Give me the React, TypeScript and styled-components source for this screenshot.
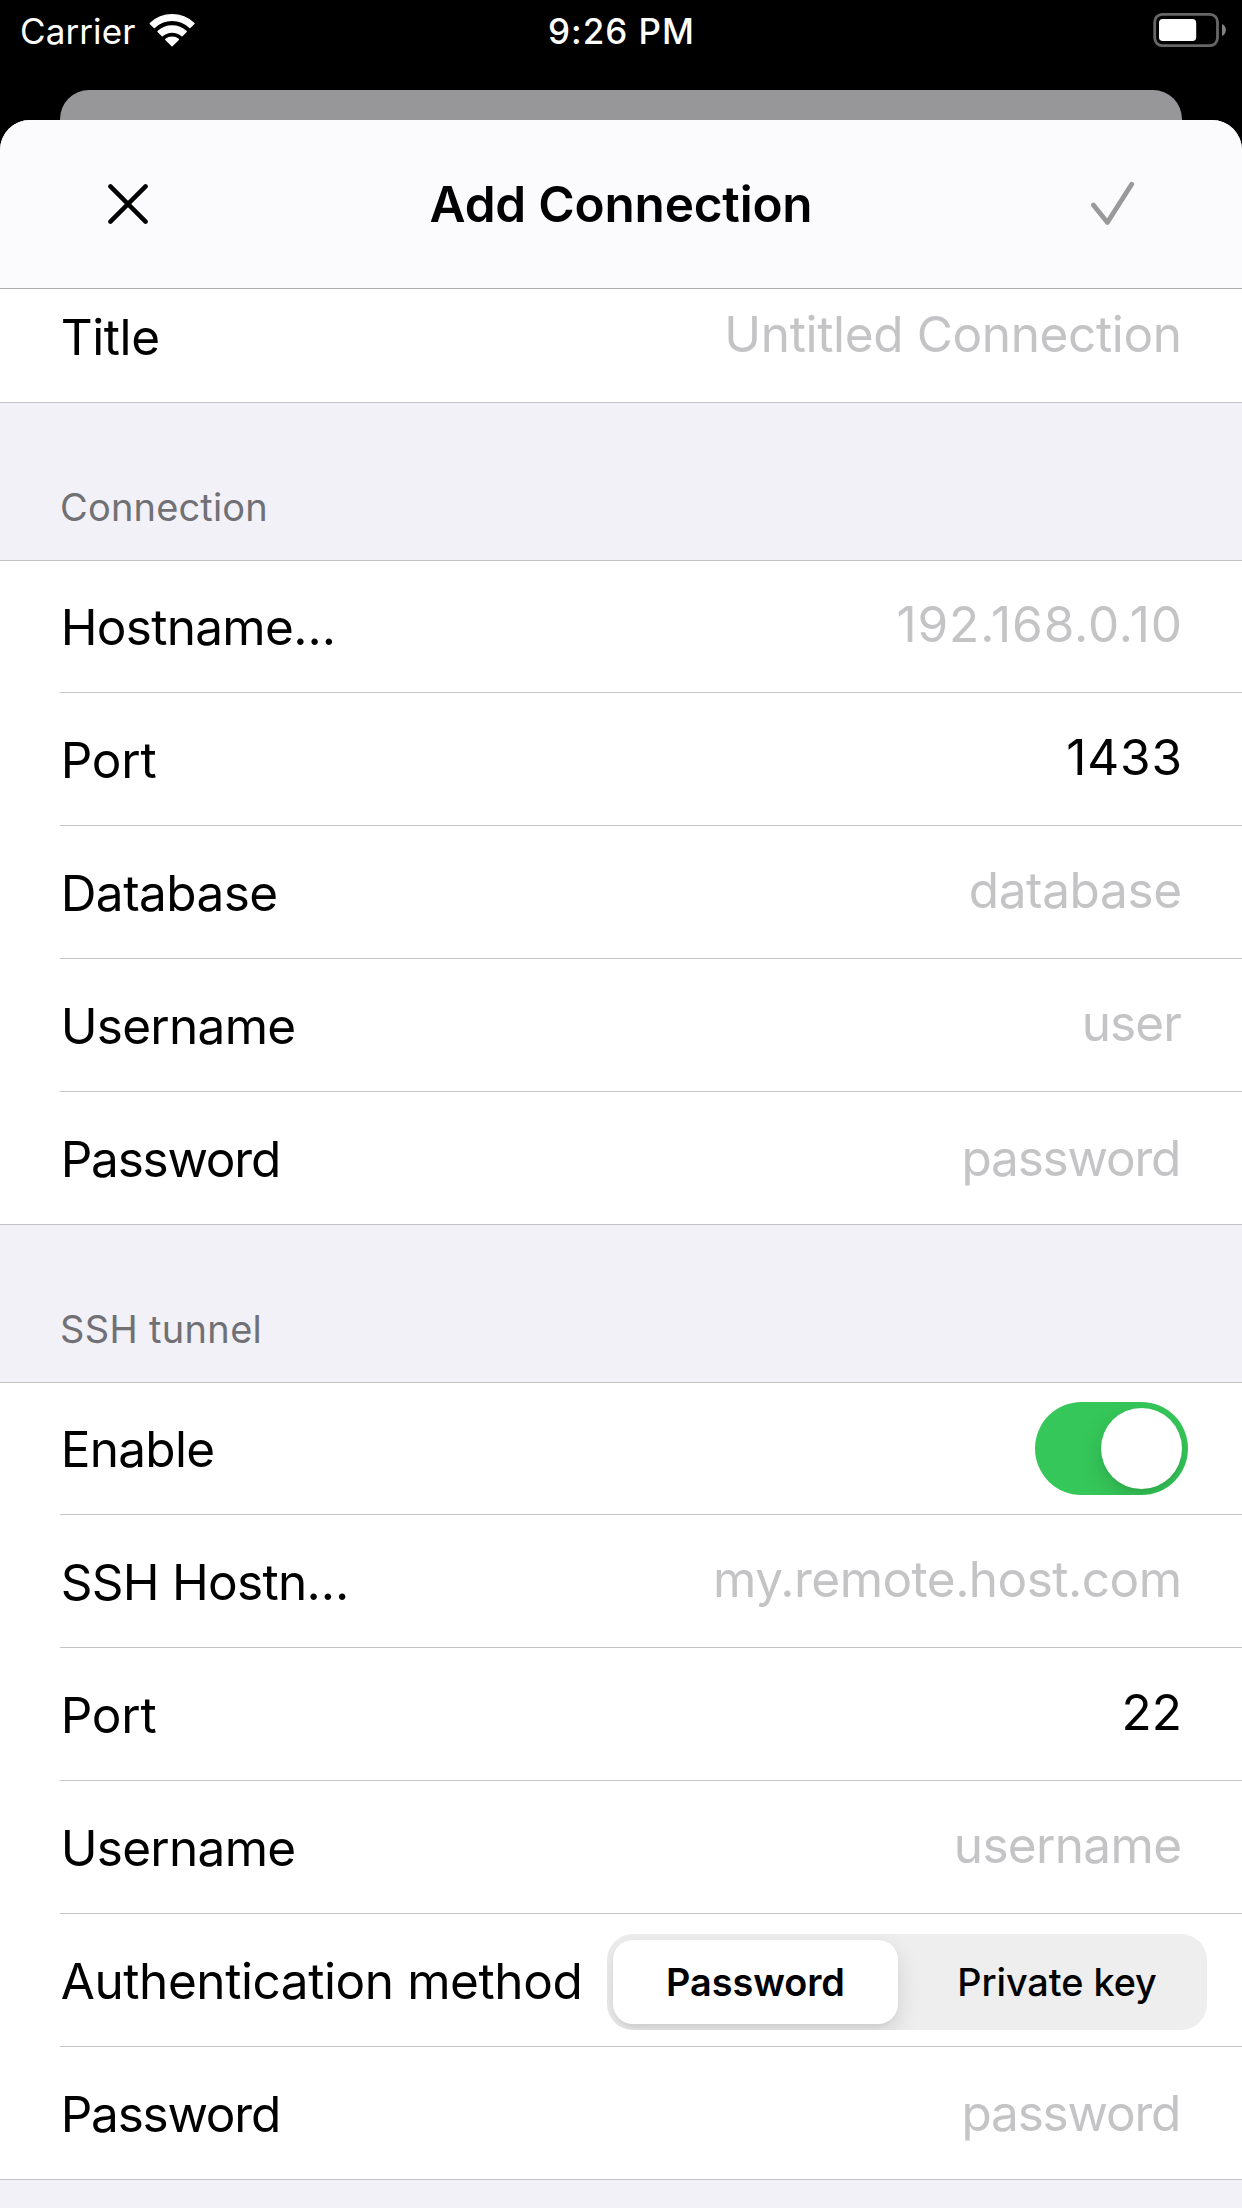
import React from "react";
import styled, { createGlobalStyle } from "styled-components";

const GlobalStyle = createGlobalStyle`
  *, *::before, *::after { box-sizing: border-box; }
  html { background: #000; }
  body {
    margin: 0;
    font-family: Inter, "Liberation Sans", sans-serif;
    color: #000;
  }
`;

const Screen = styled.div`
  width: 1242px;
  height: 2208px;
  overflow: hidden;
  display: flex;
  flex-direction: column;
  background: #000;
`;

const StatusBar = styled.header`
  height: 90px;
  flex: none;
  display: grid;
  grid-template-columns: 1fr auto 1fr;
  align-items: start;
  padding: 10px 16px 0 20px;
  font-size: 35px;
  line-height: 42px;
  color: #fff;
`;

const CarrierGroup = styled.div`
  display: flex;
  gap: 14px;
  letter-spacing: 0.1px;
`;

const Clock = styled.time`
  font-weight: 550;
  letter-spacing: 1px;
  margin-left: -3px;
`;

const BatteryIcon = styled.svg`
  justify-self: end;
  margin-top: 2px;
`;

const WifiIcon = styled.svg`
  margin-top: 2px;
`;

const BackCard = styled.div`
  flex: none;
  height: 30px;
  margin: 0 60px;
  border-radius: 29px 29px 0 0;
  background: #979799;
`;

const Sheet = styled.main`
  flex: 1;
  display: flex;
  flex-direction: column;
  border-radius: 30px 30px 0 0;
  overflow: hidden;
  background: #f2f1f7;
`;

const NavBar = styled.nav`
  flex: none;
  height: 169px;
  display: grid;
  grid-template-columns: 1fr auto 1fr;
  align-items: start;
  padding: 54px 105px 0;
  background: #fbfbfd;
  border-bottom: 1px solid #acacae;
`;

const NavTitle = styled.h1`
  margin: 0;
  font-size: 49.5px;
  line-height: 60px;
  font-weight: 600;
  letter-spacing: -0.2px;
`;

const NavButton = styled.button<{ $end?: boolean }>`
  justify-self: ${(p) => (p.$end ? "end" : "start")};
  width: 46px;
  height: 60px;
  padding: 0;
  border: 0;
  background: none;
  display: flex;
`;

const Group = styled.section`
  flex: none;
  background: #fff;
  border-bottom: 1px solid #c4c4c6;
`;

const Row = styled.div<{ $height?: number; $end?: number }>`
  height: ${(p) => p.$height ?? 133}px;
  margin-left: 60px;
  padding-right: ${(p) => p.$end ?? 60}px;
  display: flex;
  align-items: flex-end;
  justify-content: space-between;
  border-bottom: 1px solid #c4c4c6;

  &:last-child {
    height: ${(p) => (p.$height ?? 133) - 1}px;
    border-bottom: 0;
  }
`;

const Label = styled.label<{ $tracking: number }>`
  padding: 0 0 35px 0.7px;
  font-size: 49.5px;
  line-height: 60px;
  white-space: pre;
  letter-spacing: ${(p) => p.$tracking}px;
`;

const Value = styled.span<{ $tracking: number; $filled?: boolean; $secure?: boolean }>`
  padding-bottom: ${(p) => (p.$secure ? 36 : 38)}px;
  padding-right: ${(p) => (p.$secure ? 0.7 : 0)}px;
  margin-right: ${(p) => -p.$tracking}px;
  font-size: 49.5px;
  line-height: 60px;
  white-space: pre;
  letter-spacing: ${(p) => p.$tracking}px;
  color: ${(p) => (p.$filled ? "#000" : "#c4c4c6")};
`;

const SectionHeader = styled.h2<{ $tracking: number }>`
  flex: none;
  height: 158px;
  margin: 0;
  padding: 0 60px 30px;
  display: flex;
  align-items: flex-end;
  font-size: 38px;
  line-height: 46px;
  font-weight: 400;
  letter-spacing: ${(p) => p.$tracking}px;
  color: #707075;
  border-bottom: 1px solid #c4c4c6;
`;

const Toggle = styled.div`
  width: 153px;
  height: 93px;
  margin-bottom: 19px;
  padding: 6px;
  display: flex;
  justify-content: flex-end;
  border-radius: 47px;
  background: #35c759;
  overflow: hidden;
`;

const Knob = styled.div`
  width: 81px;
  height: 81px;
  border-radius: 50%;
  background: #fff;
  box-shadow: 0 9px 24px rgba(0, 0, 0, 0.14), 0 3px 3px rgba(0, 0, 0, 0.04);
`;

const Segmented = styled.div`
  width: 600px;
  height: 96px;
  margin-bottom: 16px;
  padding: 6px 0 6px 6px;
  display: flex;
  gap: 9px;
  border-radius: 26px;
  background: #eeeeef;
  overflow: hidden;
`;

const Segment = styled.button<{ $selected?: boolean }>`
  flex: ${(p) => (p.$selected ? "0 0 285px" : "1")};
  height: 84px;
  padding: 0;
  border: 0;
  border-radius: 20px;
  font-family: inherit;
  font-size: 37.8px;
  line-height: 46px;
  font-weight: ${(p) => (p.$selected ? 600 : 500)};
  letter-spacing: -0.05px;
  color: #000;
  background: ${(p) => (p.$selected ? "#fff" : "transparent")};
  box-shadow: ${(p) =>
    p.$selected ? "0 9px 24px rgba(0,0,0,0.12), 0 3px 3px rgba(0,0,0,0.04)" : "none"};
`;

interface Field {
  label: string;
  labelTracking: number;
  value: string;
  valueTracking: number;
  filled?: boolean;
  secure?: boolean;
}

const connectionFields: Field[] = [
  { label: "Hostname…", labelTracking: -0.7, value: "192.168.0.10", valueTracking: 0.9 },
  { label: "Port", labelTracking: -0.25, value: "1433", valueTracking: 0.85, filled: true },
  { label: "Database", labelTracking: -0.54, value: "database", valueTracking: -0.38 },
  { label: "Username", labelTracking: -0.72, value: "user", valueTracking: -0.86 },
  { label: "Password", labelTracking: -1.22, value: "password", valueTracking: -1.2, secure: true },
];

const sshFields: Field[] = [
  { label: "SSH Hostn…", labelTracking: -0.72, value: "my.remote.host.com", valueTracking: -0.53 },
  { label: "Port", labelTracking: -0.25, value: "22", valueTracking: 0.2, filled: true },
  { label: "Username", labelTracking: -0.72, value: "username", valueTracking: -0.68 },
];

function FieldRow({ field, height }: { field: Field; height?: number }) {
  return (
    <Row $height={height}>
      <Label $tracking={field.labelTracking}>{field.label}</Label>
      <Value $tracking={field.valueTracking} $filled={field.filled} $secure={field.secure}>
        {field.value}
      </Value>
    </Row>
  );
}

export default function App() {
  return (
    <>
      <GlobalStyle />
      <Screen>
        <StatusBar>
          <CarrierGroup>
            <span>Carrier</span>
            <WifiIcon width="48" height="36" viewBox="0 0 48 36" fill="#fff" stroke="#fff" strokeWidth="1.4" strokeLinejoin="round">
              <path d="M1.2 11.4 A31.8 31.8 0 0 1 45 11.4 L40.9 15.5 A25.6 25.6 0 0 0 5.3 15.5 Z" />
              <path d="M9 19.5 A20.9 20.9 0 0 1 37.2 19.5 L33 23.8 A14.8 14.8 0 0 0 13.3 23.8 Z" />
              <path d="M16.8 27.4 A9.7 9.7 0 0 1 29.4 27.4 L23.1 33.8 Z" />
            </WifiIcon>
          </CarrierGroup>
          <Clock>9:26 PM</Clock>
          <BatteryIcon width="73" height="36" viewBox="0 0 73 36">
            <rect x="1.7" y="2.4" width="62.8" height="31.2" rx="7.5" fill="none" stroke="#676767" strokeWidth="2.8" />
            <rect x="6" y="7" width="37.2" height="22" rx="3.8" fill="#fff" />
            <path d="M69 12 A6.6 6.6 0 0 1 69 24 Z" fill="#828282" />
          </BatteryIcon>
        </StatusBar>
        <BackCard />
        <Sheet>
          <NavBar>
            <NavButton aria-label="Close">
              <svg width="46" height="60" viewBox="0 0 46 60" fill="none" stroke="#000" strokeWidth="4.6" strokeLinecap="round">
                <path d="M5.4 12.4 L40.6 47.6 M40.6 12.4 L5.4 47.6" />
              </svg>
            </NavButton>
            <NavTitle>Add Connection</NavTitle>
            <NavButton $end aria-label="Save">
              <svg width="46" height="60" viewBox="0 0 46 60" fill="none" stroke="#999" strokeWidth="4.8" strokeLinecap="round" strokeLinejoin="round">
                <path d="M2.4 31 L16.4 48.4 L40.7 10.3" />
              </svg>
            </NavButton>
          </NavBar>

          <Group>
            <Row $height={114}>
              <Label $tracking={-0.4}>Title</Label>
              <Value $tracking={-0.36}>Untitled Connection</Value>
            </Row>
          </Group>

          <SectionHeader $tracking={0.17}>Connection</SectionHeader>
          <Group>
            {connectionFields.map((f, i) => (
              <FieldRow key={f.label} field={f} height={i === 0 ? 132 : 133} />
            ))}
          </Group>

          <SectionHeader $tracking={0.33}>SSH tunnel</SectionHeader>
          <Group>
            <Row $height={132} $end={54}>
              <Label $tracking={-0.72}>Enable</Label>
              <Toggle role="switch" aria-checked="true">
                <Knob />
              </Toggle>
            </Row>
            {sshFields.map((f) => (
              <FieldRow key={f.label} field={f} />
            ))}
            <Row $end={35}>
              <Label $tracking={-0.42}>Authentication method</Label>
              <Segmented>
                <Segment $selected>Password</Segment>
                <Segment>Private key</Segment>
              </Segmented>
            </Row>
            <FieldRow
              field={{ label: "Password", labelTracking: -1.22, value: "password", valueTracking: -1.2, secure: true }}
            />
          </Group>
        </Sheet>
      </Screen>
    </>
  );
}
